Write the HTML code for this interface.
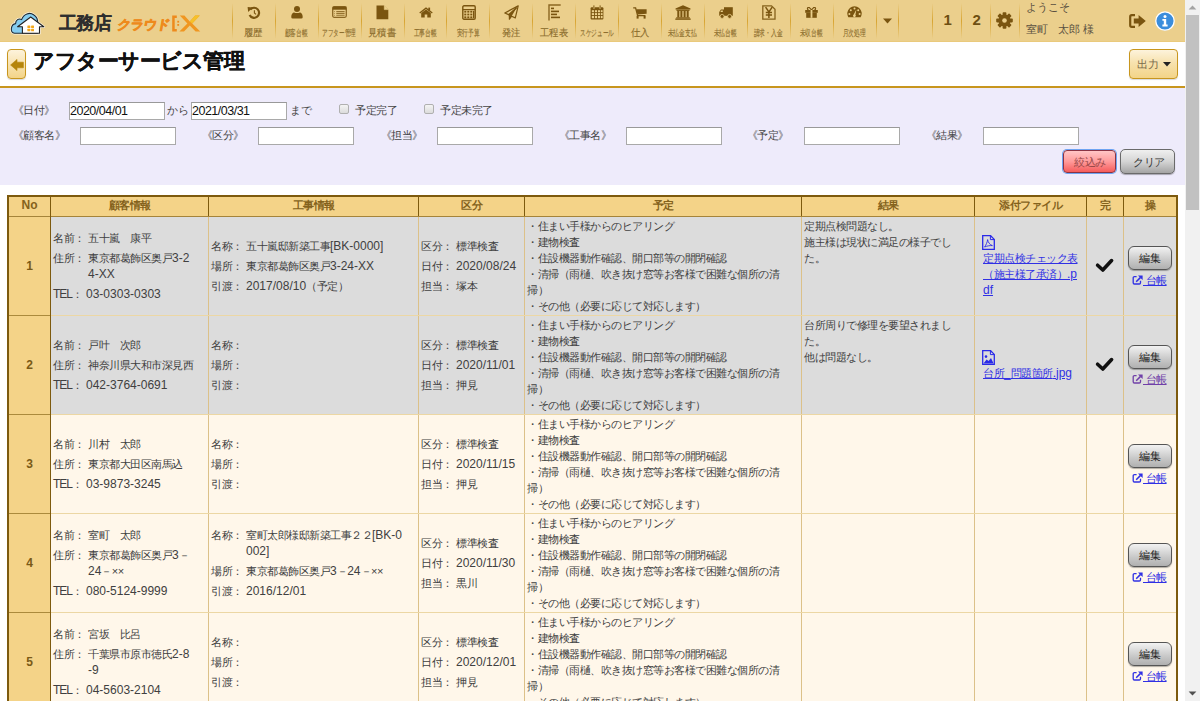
<!DOCTYPE html><html><head><meta charset="utf-8"><style>
*{box-sizing:border-box}
html,body{margin:0;padding:0;width:1200px;height:701px;overflow:hidden;background:#fff}
body{font-family:"Liberation Sans",sans-serif;font-size:11px;letter-spacing:-0.5px;color:#333;position:relative}
.l{font-size:12px;letter-spacing:0}
.a{position:absolute}
#hd{position:absolute;left:0;top:0;width:1185px;height:42px;background:#ebcf8c;box-shadow:inset 0 -1px #eaca7c}
.sep{position:absolute;top:3px;width:1px;height:36px;background:linear-gradient(to bottom,rgba(214,160,40,0) 0%,rgba(214,160,40,.9) 50%,rgba(214,160,40,0) 100%)}
.ni{position:absolute;top:0;height:42px}
.ni svg{position:absolute;display:block}
.nl{position:absolute;top:27px;left:0;width:100%;text-align:center;font-size:10px;letter-spacing:0;color:#8b6d2c;line-height:11px;white-space:nowrap}
.nl span{display:inline-block;-webkit-text-stroke:0.15px #8b6d2c}
#tt{position:absolute;left:0;top:42px;width:1185px;height:46px;background:#fff;border-bottom:2px solid #c8961e}
#flt{position:absolute;left:0;top:88px;width:1185px;height:97px;background:#eeebfb}
.fl{position:absolute;font-size:11px;letter-spacing:-0.5px;color:#444;line-height:14px;white-space:nowrap}
.inp{position:absolute;width:96px;height:18px;background:#fff;border:1px solid #a9a9a9;border-top-color:#999;font-size:12.5px;letter-spacing:-0.5px;color:#111;line-height:16px;padding-left:0}
.cb{position:absolute;width:10px;height:10px;border:1px solid #b0b0b0;border-radius:2px;background:linear-gradient(#f4f4f4,#dcdcdc)}
.hl{position:absolute;background:#7d5a0e}
.cell{position:absolute;display:flex;flex-direction:column;justify-content:center;line-height:16px;color:#404040}
.kv{display:flex;margin:2px 0}
.kv .k{flex:none;margin-right:3.5px}
.tel{letter-spacing:-1px}
.kv .v{flex:1;word-break:break-all}
a{color:#3030e4;text-decoration:underline}
.btn{position:absolute;border-radius:5px}
</style></head><body>

<div id="hd">
<svg class="a" style="left:0;top:0" width="210" height="42" viewBox="0 0 210 42">
<g fill="#fff" stroke="#fff8ea" stroke-width="2.6" stroke-linejoin="round" opacity=".9"><path d="M14.5 33.2 C9.5 32.5 10.8 24.2 15.6 23.6 C15.6 19.8 18.8 18.2 21.6 19.6 C23.6 13.8 29.8 11.8 33.6 14.8 C36.4 16.4 38 19.6 37.5 23.5 L37.5 33.2 Z"/><path d="M17.6 26.8 L30.7 17 L43.8 26.8 H39.5 V33.3 H22.4 V26.8 Z"/></g>
<path d="M14.5 33.2 C9.5 32.5 10.8 24.2 15.6 23.6 C15.6 19.8 18.8 18.2 21.6 19.6 C23.6 13.8 29.8 11.8 33.6 14.8 C36.4 16.4 38 19.6 37.5 23.5 L37.5 33.2 Z" fill="#85cdf0" stroke="#1d2b33" stroke-width="1.1" stroke-linejoin="round"/>
<path d="M17.6 26.8 L30.7 17 L43.8 26.8 H39.5 V33.3 H22.4 V26.8 Z" fill="#fff" stroke="#222" stroke-width="1.1" stroke-linejoin="round"/>
<g fill="#f2a81c"><rect x="27.4" y="25.5" width="2.9" height="2.6" rx=".5"/><rect x="31.1" y="25.5" width="2.9" height="2.6" rx=".5"/><rect x="27.4" y="28.7" width="2.9" height="2.6" rx=".5"/><rect x="31.1" y="28.7" width="2.9" height="2.6" rx=".5"/></g>
</svg>
<div class="a" style="left:59px;top:12px;font-size:18px;letter-spacing:-0.6px;font-weight:bold;color:#2e2e2e;line-height:22px;-webkit-text-stroke:0.15px #2e2e2e">工務店</div>
<div class="a" style="left:116px;top:17px;font-size:13px;letter-spacing:-0.3px;font-weight:bold;color:#ee8a1c;line-height:16px;-webkit-text-stroke:0.8px #ee8a1c;transform:skewX(-10deg) scaleX(1.02);transform-origin:left bottom">クラウド</div>
<svg class="a" style="left:171px;top:14px" width="31" height="19" viewBox="0 0 31 19"><path d="M1.2 1.6 H5.8 V4 H3.7 V15 H5.8 V17.4 H1.2Z" fill="#ee8a1c"/><rect x="6.3" y="6.8" width="1.8" height="1.8" fill="#ee8a1c"/><rect x="6.3" y="10" width="1.8" height="1.8" fill="#ee8a1c"/><path d="M8.8 1.6 H13.4 L18.8 7.6 L24.2 1.6 H28.8 L21.2 9.5 L29.2 17.4 H24.6 L18.8 11.4 L13 17.4 H8.4 L16.4 9.5Z" fill="#f09620"/><path d="M24.2 1.6 H28.8 L21.2 9.5 L18.8 7.6Z" fill="#f6c12a"/></svg>
<div class="sep" style="left:232px"></div>
<div class="sep" style="left:275px"></div>
<div class="sep" style="left:318px"></div>
<div class="sep" style="left:361px"></div>
<div class="sep" style="left:404px"></div>
<div class="sep" style="left:446px"></div>
<div class="sep" style="left:489px"></div>
<div class="sep" style="left:532px"></div>
<div class="sep" style="left:575px"></div>
<div class="sep" style="left:618px"></div>
<div class="sep" style="left:661px"></div>
<div class="sep" style="left:704px"></div>
<div class="sep" style="left:747px"></div>
<div class="sep" style="left:790px"></div>
<div class="sep" style="left:833px"></div>
<div class="sep" style="left:876px"></div>
<div class="sep" style="left:898px"></div>
<div class="sep" style="left:932px"></div>
<div class="sep" style="left:961px"></div>
<div class="sep" style="left:990px"></div>
<div class="sep" style="left:1019px"></div>
<div class="ni" style="left:232.0px;width:42.89999999999998px"><svg style="left:15.1px;top:5.5px" width="14" height="13" viewBox="0 0 14 13"><path d="M3.2 3.6 A5 5 0 1 1 2.6 9" fill="none" stroke="#7a5510" stroke-width="2.2"/><path d="M0.6 1 L5.6 1.6 L1.2 6 Z" fill="#7a5510"/><path d="M7.4 4.2 V7 L9 8.4" fill="none" stroke="#7a5510" stroke-width="1.1"/></svg><div class="nl" style="left:-10px;width:62.89999999999998px"><span style="transform:scaleX(0.93);transform-origin:center">履歴</span></div></div>
<div class="ni" style="left:274.9px;width:42.900000000000034px"><svg style="left:16.2px;top:5.5px" width="12" height="13" viewBox="0 0 12 13"><circle cx="6" cy="3.1" r="3" fill="#7a5510"/><path d="M0.3 11.2 C0.3 7.6 2 6.6 3.2 6.4 C4.4 7.3 7.6 7.3 8.8 6.4 C10 6.6 11.7 7.6 11.7 11.2 Q11.7 12.6 10.3 12.6 H1.7 Q0.3 12.6 0.3 11.2Z" fill="#7a5510"/></svg><div class="nl" style="left:-20px;width:82.90000000000003px"><span style="transform:scale(0.57,0.9);transform-origin:center">顧客台帳</span></div></div>
<div class="ni" style="left:317.8px;width:42.89999999999998px"><svg style="left:14.6px;top:6px" width="15" height="12" viewBox="0 0 15 12"><rect x="0.7" y="0.7" width="13.6" height="10.6" rx="1.5" fill="none" stroke="#7a5510" stroke-width="1.3" opacity=".85"/><rect x="0.7" y="0.7" width="13.6" height="3" fill="#7a5510"/><path d="M2.2 5.5 H3 M2.2 7.4 H3 M2.2 9.3 H3" stroke="#7a5510" stroke-width="1" opacity=".6"/><path d="M4.3 5.5 H12.6 M4.3 7.4 H12.6 M4.3 9.3 H12.6" stroke="#7a5510" stroke-width="1.1" opacity=".75"/></svg><div class="nl" style="left:-20px;width:82.89999999999998px"><span style="transform:scale(0.56,0.9);transform-origin:center">アフター管理</span></div></div>
<div class="ni" style="left:360.7px;width:42.900000000000034px"><svg style="left:15.7px;top:4.8px" width="13" height="15" viewBox="0 0 13 15"><path d="M0.5 0.5 H8 L12.3 4.8 V14.3 H0.5 Z" fill="#7a5510"/><path d="M8.3 0.5 V4.6 H12.3" fill="#ebd08c" stroke="#ebd08c" stroke-width="0.6"/></svg><div class="nl" style="left:-10px;width:62.900000000000034px"><span style="transform:scaleX(0.93);transform-origin:center">見積書</span></div></div>
<div class="ni" style="left:403.6px;width:42.89999999999998px"><svg style="left:15.1px;top:6.6px" width="14" height="11" viewBox="0 0 14 11"><path d="M0.3 5.6 L7 0.3 L13.7 5.6 L12.9 6.4 L7 1.9 L1.1 6.4Z" fill="#7a5510"/><rect x="9.3" y="0.6" width="1.8" height="3" fill="#7a5510"/><path d="M2.2 6 L7 2.5 L11.8 6 V10.6 H8.3 V7.6 H5.7 V10.6 H2.2Z" fill="#7a5510"/></svg><div class="nl" style="left:-20px;width:82.89999999999998px"><span style="transform:scale(0.57,0.9);transform-origin:center">工事台帳</span></div></div>
<div class="ni" style="left:446.5px;width:42.89999999999998px"><svg style="left:15.1px;top:4.8px" width="14" height="15" viewBox="0 0 14 15"><rect x="0.8" y="0.8" width="12.4" height="13.4" rx="1.2" fill="none" stroke="#7a5510" stroke-width="1.4"/><path d="M0.8 4.6 H13.2" stroke="#7a5510" stroke-width="1.2"/><g fill="#7a5510"><rect x="2.3" y="5.8" width="2" height="1.8"/><rect x="5.3" y="5.8" width="2" height="1.8"/><rect x="8.3" y="5.8" width="2" height="1.8"/><rect x="2.3" y="8.6" width="2" height="1.8"/><rect x="5.3" y="8.6" width="2" height="1.8"/><rect x="8.3" y="8.6" width="2" height="1.8"/><rect x="2.3" y="11.4" width="2" height="1.8"/><rect x="5.3" y="11.4" width="2" height="1.8"/><rect x="8.3" y="11.4" width="2" height="1.8"/><rect x="11" y="5.8" width="1.3" height="7.4"/></g></svg><div class="nl" style="left:-20px;width:82.89999999999998px"><span style="transform:scale(0.57,0.9);transform-origin:center">実行予算</span></div></div>
<div class="ni" style="left:489.4px;width:42.89999999999998px"><svg style="left:14.6px;top:4.8px" width="15" height="15" viewBox="0 0 15 15"><path d="M14.2 0.8 L0.8 8 L4.6 9.6 L12.5 2.8 L5.4 10.2 V14.2 L7.6 11.2 L11.3 12.9 Z" fill="none" stroke="#7a5510" stroke-width="1.2" stroke-linejoin="round"/><path d="M12.5 2.8 L4.6 9.6 L5.4 14.2 L7.6 11.2Z" fill="#7a5510"/></svg><div class="nl" style="left:-10px;width:62.89999999999998px"><span style="transform:scaleX(0.93);transform-origin:center">発注</span></div></div>
<div class="ni" style="left:532.3px;width:42.90000000000009px"><svg style="left:15.7px;top:3.8px" width="13" height="17" viewBox="0 0 13 17"><path d="M1 16.5 V1 H12.7" fill="none" stroke="#7a5510" stroke-width="1.4" opacity=".85"/><g fill="#7a5510"><rect x="3" y="3.6" width="3" height="1.6"/><rect x="3" y="6.6" width="8" height="1.6"/><rect x="3" y="9.6" width="6" height="1.6"/><rect x="3" y="12.6" width="9" height="1.6"/></g></svg><div class="nl" style="left:-10px;width:62.90000000000009px"><span style="transform:scaleX(0.93);transform-origin:center">工程表</span></div></div>
<div class="ni" style="left:575.2px;width:42.899999999999864px"><svg style="left:15.1px;top:4.6px" width="14" height="15" viewBox="0 0 14 15"><rect x="0.6" y="2.3" width="12.8" height="12.3" rx="1" fill="#7a5510"/><g fill="#ebd08c"><rect x="1.8" y="5.2" width="2.2" height="2"/><rect x="4.9" y="5.2" width="2.2" height="2"/><rect x="8" y="5.2" width="2.2" height="2"/><rect x="11" y="5.2" width="1.6" height="2"/><rect x="1.8" y="8.1" width="2.2" height="2"/><rect x="4.9" y="8.1" width="2.2" height="2"/><rect x="8" y="8.1" width="2.2" height="2"/><rect x="11" y="8.1" width="1.6" height="2"/><rect x="1.8" y="11" width="2.2" height="2.2"/><rect x="4.9" y="11" width="2.2" height="2.2"/><rect x="8" y="11" width="2.2" height="2.2"/><rect x="11" y="11" width="1.6" height="2.2"/><rect x="3" y="0.2" width="1.8" height="3.6" rx=".9"/><rect x="9.2" y="0.2" width="1.8" height="3.6" rx=".9"/></g><rect x="3.4" y="0.4" width="1" height="3.2" fill="#7a5510"/><rect x="9.6" y="0.4" width="1" height="3.2" fill="#7a5510"/></svg><div class="nl" style="left:-20px;width:82.89999999999986px"><span style="transform:scale(0.56,0.9);transform-origin:center">スケジュール</span></div></div>
<div class="ni" style="left:618.0999999999999px;width:42.90000000000009px"><svg style="left:15.2px;top:6.5px" width="14" height="12" viewBox="0 0 14 12"><path d="M0.2 0.9 H2.6 L4.6 8.6 H12.4" fill="none" stroke="#7a5510" stroke-width="1.3"/><path d="M3.3 2.3 H13.6 V6.8 L4.5 7.4Z" fill="#7a5510"/><rect x="3.6" y="8.8" width="2" height="2.8" fill="#7a5510"/><rect x="10.6" y="8.8" width="2" height="2.8" fill="#7a5510"/></svg><div class="nl" style="left:-10px;width:62.90000000000009px"><span style="transform:scaleX(0.93);transform-origin:center">仕入</span></div></div>
<div class="ni" style="left:661.0px;width:42.89999999999998px"><svg style="left:14.1px;top:4.6px" width="16" height="15" viewBox="0 0 16 15"><path d="M8 0.3 L15.5 3.6 V4.4 H0.5 V3.6Z" fill="#7a5510"/><rect x="1.5" y="4.6" width="13" height="1.3" fill="#7a5510"/><g fill="#7a5510"><rect x="2.3" y="5.9" width="2" height="6.4"/><rect x="5.4" y="5.9" width="2" height="6.4"/><rect x="8.6" y="5.9" width="2" height="6.4"/><rect x="11.7" y="5.9" width="2" height="6.4"/></g><rect x="1.2" y="12.3" width="13.6" height="1.2" fill="#7a5510"/><rect x="0.3" y="13.5" width="15.4" height="1.3" fill="#7a5510"/></svg><div class="nl" style="left:-20px;width:82.89999999999998px"><span style="transform:scale(0.57,0.9);transform-origin:center">未払金支払</span></div></div>
<div class="ni" style="left:703.9px;width:42.89999999999998px"><svg style="left:15.1px;top:6.5px" width="14" height="12" viewBox="0 0 14 12"><rect x="5" y="0.2" width="8.8" height="8.6" fill="#7a5510"/><path d="M0.2 5 L2 2.6 H5 V8.8 H0.2Z" fill="#7a5510"/><path d="M1.3 4.9 L2.4 3.5 H3.8 V4.9Z" fill="#ebd08c"/><circle cx="3.1" cy="9.4" r="2" fill="#7a5510" stroke="#ebd08c" stroke-width="0.8"/><circle cx="10.6" cy="9.4" r="2" fill="#7a5510" stroke="#ebd08c" stroke-width="0.8"/></svg><div class="nl" style="left:-20px;width:82.89999999999998px"><span style="transform:scale(0.57,0.9);transform-origin:center">未払台帳</span></div></div>
<div class="ni" style="left:746.8px;width:42.89999999999998px"><svg style="left:15.1px;top:4.6px" width="14" height="15" viewBox="0 0 14 15"><path d="M0.8 0.8 H9.5 L13 4.3 V14.2 H0.8Z" fill="none" stroke="#7a5510" stroke-width="1.3" opacity=".9"/><path d="M3.6 2.2 L6.9 7 L10.2 2.2 M6.9 7 V13 M3.8 7.6 H10 M3.8 10 H10" fill="none" stroke="#7a5510" stroke-width="1.5"/></svg><div class="nl" style="left:-20px;width:82.89999999999998px"><span style="transform:scale(0.57,0.9);transform-origin:center">請求・入金</span></div></div>
<div class="ni" style="left:789.6999999999999px;width:42.90000000000009px"><svg style="left:15.7px;top:6.5px" width="13" height="11" viewBox="0 0 13 11"><path d="M3.4 3 C1.6 1.8 2.8 -0.4 4.4 0.6 L6.5 2.8 L8.6 0.6 C10.2 -0.4 11.4 1.8 9.6 3" fill="none" stroke="#7a5510" stroke-width="1.2"/><rect x="0.2" y="3" width="12.6" height="2.8" fill="#7a5510"/><rect x="1.2" y="5.8" width="10.6" height="5" fill="#7a5510"/><rect x="5.6" y="3" width="1.8" height="7.8" fill="#ebd08c"/></svg><div class="nl" style="left:-20px;width:82.90000000000009px"><span style="transform:scale(0.57,0.9);transform-origin:center">未収台帳</span></div></div>
<div class="ni" style="left:832.6px;width:42.89999999999998px"><svg style="left:14.6px;top:6.3px" width="15" height="12" viewBox="0 0 15 12"><path d="M1.32 11.2 A7.2 7.2 0 1 1 13.68 11.2 Z" fill="#7a5510"/><g fill="#ebd08c"><circle cx="7.5" cy="2.6" r="1"/><circle cx="3.8" cy="4.3" r="1"/><circle cx="11.2" cy="4.3" r="1"/><circle cx="2.4" cy="8" r="1"/><circle cx="12.6" cy="8" r="1"/><path d="M9.4 3.4 L8.4 8.8 A1.4 1.4 0 1 1 6.7 8.6Z"/></g></svg><div class="nl" style="left:-20px;width:82.89999999999998px"><span style="transform:scale(0.57,0.9);transform-origin:center">月次処理</span></div></div>
<svg class="a" style="left:883px;top:18px" width="9" height="6" viewBox="0 0 9 6"><path d="M0 0.5 H9 L4.5 5.5Z" fill="#7a5510"/></svg>
<div class="a" style="left:943.5px;top:11px;font-size:15px;font-weight:bold;letter-spacing:0;color:#6e4f12;line-height:17px">1</div>
<div class="a" style="left:972.5px;top:11px;font-size:15px;font-weight:bold;letter-spacing:0;color:#6e4f12;line-height:17px">2</div>
<svg class="a" style="left:996px;top:12px" width="17" height="17" viewBox="0 0 17 17"><g fill="#7a5510"><rect x="6.6" y="0.2" width="3.8" height="4" rx="0.8" transform="rotate(0 8.5 8.5)"/><rect x="6.6" y="0.2" width="3.8" height="4" rx="0.8" transform="rotate(45 8.5 8.5)"/><rect x="6.6" y="0.2" width="3.8" height="4" rx="0.8" transform="rotate(90 8.5 8.5)"/><rect x="6.6" y="0.2" width="3.8" height="4" rx="0.8" transform="rotate(135 8.5 8.5)"/><rect x="6.6" y="0.2" width="3.8" height="4" rx="0.8" transform="rotate(180 8.5 8.5)"/><rect x="6.6" y="0.2" width="3.8" height="4" rx="0.8" transform="rotate(225 8.5 8.5)"/><rect x="6.6" y="0.2" width="3.8" height="4" rx="0.8" transform="rotate(270 8.5 8.5)"/><rect x="6.6" y="0.2" width="3.8" height="4" rx="0.8" transform="rotate(315 8.5 8.5)"/><circle cx="8.5" cy="8.5" r="6"/></g><circle cx="8.5" cy="8.5" r="2.3" fill="#ebcf8c"/></svg>
<div class="a" style="left:1025.5px;top:0px;font-size:11px;letter-spacing:0px;color:#5a5040;line-height:14px">ようこそ</div>
<div class="a" style="left:1026px;top:22px;font-size:11px;letter-spacing:-0.2px;color:#5a5040;line-height:14px">室町　太郎 様</div>
<svg class="a" style="left:1129px;top:14px" width="18" height="14" viewBox="0 0 18 14"><path d="M6 1.2 H2.8 Q1.2 1.2 1.2 2.8 V11.2 Q1.2 12.8 2.8 12.8 H6" fill="none" stroke="#7a5510" stroke-width="2.2"/><path d="M4.8 4.6 H9.6 V1 L16.8 7 L9.6 13 V9.4 H4.8Z" fill="#7a5510"/></svg>
<svg class="a" style="left:1155px;top:11px" width="20" height="20" viewBox="0 0 20 20"><circle cx="10" cy="10" r="9.2" fill="#3a8ddc" stroke="#fff" stroke-width="1.3"/><circle cx="10" cy="5.4" r="1.5" fill="#fff"/><path d="M7.4 8 H11.2 V13.6 H12.6 V15.4 H7.4 V13.6 H8.8 V9.8 H7.4Z" fill="#fff"/></svg>
</div>
<div id="tt">
<div class="a" style="left:7px;top:7px;width:19px;height:30px;border:1px solid #c8961e;border-radius:4px;background:linear-gradient(#fdf3dc,#f3d488);box-shadow:0 1px 1px rgba(0,0,0,.15)"><svg style="position:absolute;left:2px;top:9px" width="14" height="12" viewBox="0 0 14 12"><path d="M0.6 6 L7 0.4 V3.2 H13.4 V8.8 H7 V11.6Z" fill="#b5850c" stroke="#b5850c" stroke-width="0.6" stroke-linejoin="round"/></svg></div>
<div class="a" style="left:33px;top:6.5px;font-size:21px;letter-spacing:-0.5px;font-weight:bold;color:#111;line-height:24px;-webkit-text-stroke:0.35px #111">アフターサービス管理</div>
<div class="a" style="left:1129px;top:7px;width:49px;height:30px;border:1px solid #c8961e;border-radius:4px;background:linear-gradient(#fdf3dc 0%,#f7e2ae 45%,#f3d488 100%);box-shadow:0 1px 1px rgba(0,0,0,.15)"><span class="a" style="left:7px;top:8px;font-size:11px;letter-spacing:-0.3px;color:#7a6a4a;line-height:12px">出力</span><svg style="position:absolute;left:33px;top:12px" width="8" height="5" viewBox="0 0 8 5"><path d="M0 0 H8 L4 4.5Z" fill="#222"/></svg></div>
</div>
<div id="flt">
<div class="fl" style="left:12.5px;top:15.4px">《日付》</div>
<div class="inp" style="left:69px;top:14px;width:96px">2020/04/01</div>
<div class="fl" style="left:167px;top:15.4px">から</div>
<div class="inp" style="left:191px;top:14px;width:96px">2021/03/31</div>
<div class="fl" style="left:290px;top:15.4px">まで</div>
<div class="cb" style="left:339px;top:16px"></div>
<div class="fl" style="left:355px;top:15.4px">予定完了</div>
<div class="cb" style="left:424px;top:16px"></div>
<div class="fl" style="left:440px;top:15.4px">予定未完了</div>
<div class="fl" style="left:12.5px;top:40.4px">《顧客名》</div>
<div class="inp" style="left:80px;top:39px;width:96px"></div>
<div class="fl" style="left:201.5px;top:40.4px">《区分》</div>
<div class="inp" style="left:258px;top:39px;width:96px"></div>
<div class="fl" style="left:380.5px;top:40.4px">《担当》</div>
<div class="inp" style="left:437px;top:39px;width:96px"></div>
<div class="fl" style="left:558.5px;top:40.4px">《工事名》</div>
<div class="inp" style="left:626px;top:39px;width:96px"></div>
<div class="fl" style="left:746.5px;top:40.4px">《予定》</div>
<div class="inp" style="left:804px;top:39px;width:96px"></div>
<div class="fl" style="left:925.5px;top:40.4px">《結果》</div>
<div class="inp" style="left:983px;top:39px;width:96px"></div>
<div class="a" style="left:1063px;top:62px;width:53px;height:23px;border:1px solid #8a3444;border-radius:4px;background:linear-gradient(#ffc6c6,#ff9a9a 50%,#f65c5c);box-shadow:0 0 0 1px #6ea4f2"><span class="a" style="left:10px;top:4px;font-size:11px;color:#9a4a4a;line-height:14px">絞込み</span></div>
<div class="a" style="left:1120px;top:61px;width:55px;height:25px;border:1px solid #6a6a6a;border-radius:5px;background:linear-gradient(#f0f0f0,#d4d4d4 50%,#a4a4a4);box-shadow:0 1px 1px rgba(0,0,0,.3)"><span class="a" style="left:12px;top:5px;font-size:11px;color:#333;line-height:14px">クリア</span></div>
</div>
<div class="a" style="left:9px;top:197px;width:1167px;height:19px;background:#f4d388"></div>
<div class="a" style="left:51px;top:217px;width:1125px;height:98px;background:#dcdcdc"></div>
<div class="a" style="left:9px;top:217px;width:41px;height:98px;background:#f4d388"></div>
<div class="a" style="left:51px;top:316px;width:1125px;height:98px;background:#dcdcdc"></div>
<div class="a" style="left:9px;top:316px;width:41px;height:98px;background:#f4d388"></div>
<div class="a" style="left:51px;top:415px;width:1125px;height:98px;background:#fff7ea"></div>
<div class="a" style="left:9px;top:415px;width:41px;height:98px;background:#f4d388"></div>
<div class="a" style="left:51px;top:514px;width:1125px;height:98px;background:#fff7ea"></div>
<div class="a" style="left:9px;top:514px;width:41px;height:98px;background:#f4d388"></div>
<div class="a" style="left:51px;top:613px;width:1125px;height:98px;background:#fff7ea"></div>
<div class="a" style="left:9px;top:613px;width:41px;height:98px;background:#f4d388"></div>
<div class="a" style="left:208px;top:217px;width:1px;height:484px;background:#dcc189"></div>
<div class="a" style="left:418px;top:217px;width:1px;height:484px;background:#dcc189"></div>
<div class="a" style="left:524px;top:217px;width:1px;height:484px;background:#dcc189"></div>
<div class="a" style="left:801px;top:217px;width:1px;height:484px;background:#dcc189"></div>
<div class="a" style="left:974px;top:217px;width:1px;height:484px;background:#dcc189"></div>
<div class="a" style="left:1086px;top:217px;width:1px;height:484px;background:#dcc189"></div>
<div class="a" style="left:1123px;top:217px;width:1px;height:484px;background:#dcc189"></div>
<div class="a" style="left:51px;top:315px;width:1125px;height:1px;background:#ecd7a4"></div>
<div class="a" style="left:9px;top:315px;width:41px;height:1px;background:#ab8a3c"></div>
<div class="a" style="left:51px;top:414px;width:1125px;height:1px;background:#ecd7a4"></div>
<div class="a" style="left:9px;top:414px;width:41px;height:1px;background:#ab8a3c"></div>
<div class="a" style="left:51px;top:513px;width:1125px;height:1px;background:#ecd7a4"></div>
<div class="a" style="left:9px;top:513px;width:41px;height:1px;background:#ab8a3c"></div>
<div class="a" style="left:51px;top:612px;width:1125px;height:1px;background:#ecd7a4"></div>
<div class="a" style="left:9px;top:612px;width:41px;height:1px;background:#ab8a3c"></div>
<div class="hl" style="left:7px;top:195px;width:1171px;height:2px"></div>
<div class="hl" style="left:7px;top:195px;width:2px;height:506px"></div>
<div class="hl" style="left:1176px;top:195px;width:2px;height:506px"></div>
<div class="a" style="left:9px;top:216px;width:1167px;height:1px;background:#a5843a"></div>
<div class="hl" style="left:50px;top:197px;width:1px;height:504px"></div>
<div class="hl" style="left:208px;top:197px;width:1px;height:19px"></div>
<div class="hl" style="left:418px;top:197px;width:1px;height:19px"></div>
<div class="hl" style="left:524px;top:197px;width:1px;height:19px"></div>
<div class="hl" style="left:801px;top:197px;width:1px;height:19px"></div>
<div class="hl" style="left:974px;top:197px;width:1px;height:19px"></div>
<div class="hl" style="left:1086px;top:197px;width:1px;height:19px"></div>
<div class="hl" style="left:1123px;top:197px;width:1px;height:19px"></div>
<div class="a" style="left:9px;top:196px;width:41px;height:19px;line-height:19px;text-align:center;font-weight:bold;color:#84621c"><span class="l">No</span></div>
<div class="a" style="left:51px;top:196px;width:157px;height:19px;line-height:19px;text-align:center;font-weight:bold;color:#84621c">顧客情報</div>
<div class="a" style="left:209px;top:196px;width:209px;height:19px;line-height:19px;text-align:center;font-weight:bold;color:#84621c">工事情報</div>
<div class="a" style="left:419px;top:196px;width:105px;height:19px;line-height:19px;text-align:center;font-weight:bold;color:#84621c">区分</div>
<div class="a" style="left:525px;top:196px;width:276px;height:19px;line-height:19px;text-align:center;font-weight:bold;color:#84621c">予定</div>
<div class="a" style="left:802px;top:196px;width:172px;height:19px;line-height:19px;text-align:center;font-weight:bold;color:#84621c">結果</div>
<div class="a" style="left:975px;top:196px;width:111px;height:19px;line-height:19px;text-align:center;font-weight:bold;color:#84621c">添付ファイル</div>
<div class="a" style="left:1087px;top:196px;width:36px;height:19px;line-height:19px;text-align:center;font-weight:bold;color:#84621c">完</div>
<div class="a" style="left:1124px;top:196px;width:52px;height:19px;line-height:19px;text-align:center;font-weight:bold;color:#84621c">操</div>
<div class="a" style="left:9px;top:217px;width:41px;height:98px;display:flex;align-items:center;justify-content:center;font-weight:bold;font-size:12px;letter-spacing:0;color:#7a5a16">1</div>
<div class="cell" style="left:51px;top:217px;width:157px;height:98px;padding:0 15px 0 2px;"><div class="kv"><div class="k">名前：</div><div class="v">五十嵐　康平</div></div><div class="kv"><div class="k">住所：</div><div class="v">東京都葛飾区奥戸<span class="l">3-24-XX</span></div></div><div class="kv"><div class="k"><span class="l"><span class=tel>TEL</span></span>：</div><div class="v"><span class="l"> 03-0303-0303</span></div></div></div>
<div class="cell" style="left:209px;top:217px;width:209px;height:98px;padding:0 15px 0 2px;"><div class="kv"><div class="k">名称：</div><div class="v">五十嵐邸新築工事<span class="l">[BK-0000]</span></div></div><div class="kv"><div class="k">場所：</div><div class="v">東京都葛飾区奥戸<span class="l">3-24-XX</span></div></div><div class="kv"><div class="k">引渡：</div><div class="v"><span class="l">2017/08/10</span>（予定）</div></div></div>
<div class="cell" style="left:419px;top:217px;width:105px;height:98px;padding:0 2px;"><div class="kv"><div class="k">区分：</div><div class="v">標準検査</div></div><div class="kv"><div class="k">日付：</div><div class="v"><span class="l">2020/08/24</span></div></div><div class="kv"><div class="k">担当：</div><div class="v">塚本</div></div></div>
<div class="cell" style="left:525px;top:217px;width:276px;height:98px;padding:1px 2px;justify-content:flex-start"><div>・住まい手様からのヒアリング</div><div>・建物検査</div><div>・住設機器動作確認、開口部等の開閉確認</div><div>・清掃（雨樋、吹き抜け窓等お客様で困難な個所の清掃）</div><div>・その他（必要に応じて対応します）</div></div>
<div class="cell" style="left:802px;top:217px;width:172px;height:98px;padding:1px 2px;justify-content:flex-start;padding-right:20px"><div>定期点検問題なし。</div><div>施主様は現状に満足の様子でした。</div></div>
<div class="cell" style="left:975px;top:217px;width:111px;height:98px;padding:0 7px 0 8px;word-break:break-all"><div style="margin-left:-1px"><svg width="13" height="15" viewBox="0 0 13 15" style="display:block"><path d="M0.7 0.7 H8.6 L12.3 4.4 V14.3 H0.7Z" fill="none" stroke="#2a2ae8" stroke-width="1.3"/><path d="M8.4 0.7 V4.6 H12.3" fill="none" stroke="#2a2ae8" stroke-width="1"/><path d="M2.6 12 C4 10 5.4 7 5.6 4.6 C5.8 7 8 10 10.4 10.6 C8 10.4 4.6 11 2.6 12Z" fill="none" stroke="#2a2ae8" stroke-width="0.9"/></svg></div><div><a>定期点検チェック表（施主様了承済）<span class="l">.pdf</span></a></div></div>
<svg class="a" style="left:1095px;top:256.5px" width="20" height="16" viewBox="0 0 20 16"><path d="M2.6 8.2 L7.8 13 L16.6 3.6" fill="none" stroke="#111" stroke-width="3.6" stroke-linecap="round" stroke-linejoin="round"/></svg>
<div class="a" style="left:1128px;top:246px;width:44px;height:24px;border:1px solid #555;border-radius:6px;background:linear-gradient(#f2f2f2,#c8c8c8 60%,#b0b0b0);box-shadow:0 1px 1px rgba(0,0,0,.3)"><span class="a" style="left:10px;top:5px;font-size:11px;color:#222;line-height:12px">編集</span></div>
<div class="a" style="left:1132px;top:272.5px;width:40px;height:14px;line-height:14px;color:#3030e4;white-space:nowrap"><svg width="11" height="10" viewBox="0 0 11 10" style="vertical-align:-1px"><path d="M4.6 1.7 H2.4 Q1.2 1.7 1.2 2.9 V7.8 Q1.2 9 2.4 9 H7.3 Q8.5 9 8.5 7.8 V5.8" fill="none" stroke="#3030e4" stroke-width="1.3"/><path d="M6 0.4 H10.6 V5 Z" fill="#3030e4"/><path d="M8.6 2.4 L4.2 6.8" stroke="#3030e4" stroke-width="1.5"/></svg><a style="padding-left:0px;color:#3030e4">&nbsp;台帳</a></div>
<div class="a" style="left:9px;top:316px;width:41px;height:98px;display:flex;align-items:center;justify-content:center;font-weight:bold;font-size:12px;letter-spacing:0;color:#7a5a16">2</div>
<div class="cell" style="left:51px;top:316px;width:157px;height:98px;padding:0 15px 0 2px;"><div class="kv"><div class="k">名前：</div><div class="v">戸叶　次郎</div></div><div class="kv"><div class="k">住所：</div><div class="v">神奈川県大和市深見西</div></div><div class="kv"><div class="k"><span class="l"><span class=tel>TEL</span></span>：</div><div class="v"><span class="l"> 042-3764-0691</span></div></div></div>
<div class="cell" style="left:209px;top:316px;width:209px;height:98px;padding:0 15px 0 2px;"><div class="kv"><div class="k">名称：</div><div class="v"></div></div><div class="kv"><div class="k">場所：</div><div class="v"></div></div><div class="kv"><div class="k">引渡：</div><div class="v"></div></div></div>
<div class="cell" style="left:419px;top:316px;width:105px;height:98px;padding:0 2px;"><div class="kv"><div class="k">区分：</div><div class="v">標準検査</div></div><div class="kv"><div class="k">日付：</div><div class="v"><span class="l">2020/11/01</span></div></div><div class="kv"><div class="k">担当：</div><div class="v">押見</div></div></div>
<div class="cell" style="left:525px;top:316px;width:276px;height:98px;padding:1px 2px;justify-content:flex-start"><div>・住まい手様からのヒアリング</div><div>・建物検査</div><div>・住設機器動作確認、開口部等の開閉確認</div><div>・清掃（雨樋、吹き抜け窓等お客様で困難な個所の清掃）</div><div>・その他（必要に応じて対応します）</div></div>
<div class="cell" style="left:802px;top:316px;width:172px;height:98px;padding:1px 2px;justify-content:flex-start;padding-right:20px"><div>台所周りで修理を要望されました。</div><div>他は問題なし。</div></div>
<div class="cell" style="left:975px;top:316px;width:111px;height:98px;padding:0 7px 0 8px;word-break:break-all"><div style="margin-left:-1px"><svg width="13" height="15" viewBox="0 0 13 15" style="display:block"><path d="M0.7 0.7 H8.6 L12.3 4.4 V14.3 H0.7Z" fill="none" stroke="#2a2ae8" stroke-width="1.3"/><path d="M8.4 0.7 V4.6 H12.3" fill="none" stroke="#2a2ae8" stroke-width="1"/><circle cx="4" cy="6.6" r="1.3" fill="#2a2ae8"/><path d="M1.5 13.5 L4.6 9.4 L6.6 11 L9 8 L11.6 13.5Z" fill="#2a2ae8"/></svg></div><div><a>台所<span class="l">_</span>問題箇所<span class="l">.jpg</span></a></div></div>
<svg class="a" style="left:1095px;top:355.5px" width="20" height="16" viewBox="0 0 20 16"><path d="M2.6 8.2 L7.8 13 L16.6 3.6" fill="none" stroke="#111" stroke-width="3.6" stroke-linecap="round" stroke-linejoin="round"/></svg>
<div class="a" style="left:1128px;top:345px;width:44px;height:24px;border:1px solid #555;border-radius:6px;background:linear-gradient(#f2f2f2,#c8c8c8 60%,#b0b0b0);box-shadow:0 1px 1px rgba(0,0,0,.3)"><span class="a" style="left:10px;top:5px;font-size:11px;color:#222;line-height:12px">編集</span></div>
<div class="a" style="left:1132px;top:371.5px;width:40px;height:14px;line-height:14px;color:#7040a8;white-space:nowrap"><svg width="11" height="10" viewBox="0 0 11 10" style="vertical-align:-1px"><path d="M4.6 1.7 H2.4 Q1.2 1.7 1.2 2.9 V7.8 Q1.2 9 2.4 9 H7.3 Q8.5 9 8.5 7.8 V5.8" fill="none" stroke="#7040a8" stroke-width="1.3"/><path d="M6 0.4 H10.6 V5 Z" fill="#7040a8"/><path d="M8.6 2.4 L4.2 6.8" stroke="#7040a8" stroke-width="1.5"/></svg><a style="padding-left:0px;color:#7040a8">&nbsp;台帳</a></div>
<div class="a" style="left:9px;top:415px;width:41px;height:98px;display:flex;align-items:center;justify-content:center;font-weight:bold;font-size:12px;letter-spacing:0;color:#7a5a16">3</div>
<div class="cell" style="left:51px;top:415px;width:157px;height:98px;padding:0 15px 0 2px;"><div class="kv"><div class="k">名前：</div><div class="v">川村　太郎</div></div><div class="kv"><div class="k">住所：</div><div class="v">東京都大田区南馬込</div></div><div class="kv"><div class="k"><span class="l"><span class=tel>TEL</span></span>：</div><div class="v"><span class="l"> 03-9873-3245</span></div></div></div>
<div class="cell" style="left:209px;top:415px;width:209px;height:98px;padding:0 15px 0 2px;"><div class="kv"><div class="k">名称：</div><div class="v"></div></div><div class="kv"><div class="k">場所：</div><div class="v"></div></div><div class="kv"><div class="k">引渡：</div><div class="v"></div></div></div>
<div class="cell" style="left:419px;top:415px;width:105px;height:98px;padding:0 2px;"><div class="kv"><div class="k">区分：</div><div class="v">標準検査</div></div><div class="kv"><div class="k">日付：</div><div class="v"><span class="l">2020/11/15</span></div></div><div class="kv"><div class="k">担当：</div><div class="v">押見</div></div></div>
<div class="cell" style="left:525px;top:415px;width:276px;height:98px;padding:1px 2px;justify-content:flex-start"><div>・住まい手様からのヒアリング</div><div>・建物検査</div><div>・住設機器動作確認、開口部等の開閉確認</div><div>・清掃（雨樋、吹き抜け窓等お客様で困難な個所の清掃）</div><div>・その他（必要に応じて対応します）</div></div>
<div class="a" style="left:1128px;top:444px;width:44px;height:24px;border:1px solid #555;border-radius:6px;background:linear-gradient(#f2f2f2,#c8c8c8 60%,#b0b0b0);box-shadow:0 1px 1px rgba(0,0,0,.3)"><span class="a" style="left:10px;top:5px;font-size:11px;color:#222;line-height:12px">編集</span></div>
<div class="a" style="left:1132px;top:470.5px;width:40px;height:14px;line-height:14px;color:#3030e4;white-space:nowrap"><svg width="11" height="10" viewBox="0 0 11 10" style="vertical-align:-1px"><path d="M4.6 1.7 H2.4 Q1.2 1.7 1.2 2.9 V7.8 Q1.2 9 2.4 9 H7.3 Q8.5 9 8.5 7.8 V5.8" fill="none" stroke="#3030e4" stroke-width="1.3"/><path d="M6 0.4 H10.6 V5 Z" fill="#3030e4"/><path d="M8.6 2.4 L4.2 6.8" stroke="#3030e4" stroke-width="1.5"/></svg><a style="padding-left:0px;color:#3030e4">&nbsp;台帳</a></div>
<div class="a" style="left:9px;top:514px;width:41px;height:98px;display:flex;align-items:center;justify-content:center;font-weight:bold;font-size:12px;letter-spacing:0;color:#7a5a16">4</div>
<div class="cell" style="left:51px;top:514px;width:157px;height:98px;padding:0 15px 0 2px;"><div class="kv"><div class="k">名前：</div><div class="v">室町　太郎</div></div><div class="kv"><div class="k">住所：</div><div class="v">東京都葛飾区奥戸<span class="l">3</span>－<span class="l">24</span>－××</div></div><div class="kv"><div class="k"><span class="l"><span class=tel>TEL</span></span>：</div><div class="v"><span class="l"> 080-5124-9999</span></div></div></div>
<div class="cell" style="left:209px;top:514px;width:209px;height:98px;padding:0 15px 0 2px;"><div class="kv"><div class="k">名称：</div><div class="v">室町太郎様邸新築工事２２<span class="l">[BK-0002]</span></div></div><div class="kv"><div class="k">場所：</div><div class="v">東京都葛飾区奥戸<span class="l">3</span>－<span class="l">24</span>－××</div></div><div class="kv"><div class="k">引渡：</div><div class="v"><span class="l">2016/12/01</span></div></div></div>
<div class="cell" style="left:419px;top:514px;width:105px;height:98px;padding:0 2px;"><div class="kv"><div class="k">区分：</div><div class="v">標準検査</div></div><div class="kv"><div class="k">日付：</div><div class="v"><span class="l">2020/11/30</span></div></div><div class="kv"><div class="k">担当：</div><div class="v">黒川</div></div></div>
<div class="cell" style="left:525px;top:514px;width:276px;height:98px;padding:1px 2px;justify-content:flex-start"><div>・住まい手様からのヒアリング</div><div>・建物検査</div><div>・住設機器動作確認、開口部等の開閉確認</div><div>・清掃（雨樋、吹き抜け窓等お客様で困難な個所の清掃）</div><div>・その他（必要に応じて対応します）</div></div>
<div class="a" style="left:1128px;top:543px;width:44px;height:24px;border:1px solid #555;border-radius:6px;background:linear-gradient(#f2f2f2,#c8c8c8 60%,#b0b0b0);box-shadow:0 1px 1px rgba(0,0,0,.3)"><span class="a" style="left:10px;top:5px;font-size:11px;color:#222;line-height:12px">編集</span></div>
<div class="a" style="left:1132px;top:569.5px;width:40px;height:14px;line-height:14px;color:#3030e4;white-space:nowrap"><svg width="11" height="10" viewBox="0 0 11 10" style="vertical-align:-1px"><path d="M4.6 1.7 H2.4 Q1.2 1.7 1.2 2.9 V7.8 Q1.2 9 2.4 9 H7.3 Q8.5 9 8.5 7.8 V5.8" fill="none" stroke="#3030e4" stroke-width="1.3"/><path d="M6 0.4 H10.6 V5 Z" fill="#3030e4"/><path d="M8.6 2.4 L4.2 6.8" stroke="#3030e4" stroke-width="1.5"/></svg><a style="padding-left:0px;color:#3030e4">&nbsp;台帳</a></div>
<div class="a" style="left:9px;top:613px;width:41px;height:98px;display:flex;align-items:center;justify-content:center;font-weight:bold;font-size:12px;letter-spacing:0;color:#7a5a16">5</div>
<div class="cell" style="left:51px;top:613px;width:157px;height:98px;padding:0 15px 0 2px;"><div class="kv"><div class="k">名前：</div><div class="v">宮坂　比呂</div></div><div class="kv"><div class="k">住所：</div><div class="v">千葉県市原市徳氏<span class="l">2-8-9</span></div></div><div class="kv"><div class="k"><span class="l"><span class=tel>TEL</span></span>：</div><div class="v"><span class="l"> 04-5603-2104</span></div></div></div>
<div class="cell" style="left:209px;top:613px;width:209px;height:98px;padding:0 15px 0 2px;"><div class="kv"><div class="k">名称：</div><div class="v"></div></div><div class="kv"><div class="k">場所：</div><div class="v"></div></div><div class="kv"><div class="k">引渡：</div><div class="v"></div></div></div>
<div class="cell" style="left:419px;top:613px;width:105px;height:98px;padding:0 2px;"><div class="kv"><div class="k">区分：</div><div class="v">標準検査</div></div><div class="kv"><div class="k">日付：</div><div class="v"><span class="l">2020/12/01</span></div></div><div class="kv"><div class="k">担当：</div><div class="v">押見</div></div></div>
<div class="cell" style="left:525px;top:613px;width:276px;height:98px;padding:1px 2px;justify-content:flex-start"><div>・住まい手様からのヒアリング</div><div>・建物検査</div><div>・住設機器動作確認、開口部等の開閉確認</div><div>・清掃（雨樋、吹き抜け窓等お客様で困難な個所の清掃）</div><div>・その他（必要に応じて対応します）</div></div>
<div class="a" style="left:1128px;top:642px;width:44px;height:24px;border:1px solid #555;border-radius:6px;background:linear-gradient(#f2f2f2,#c8c8c8 60%,#b0b0b0);box-shadow:0 1px 1px rgba(0,0,0,.3)"><span class="a" style="left:10px;top:5px;font-size:11px;color:#222;line-height:12px">編集</span></div>
<div class="a" style="left:1132px;top:668.5px;width:40px;height:14px;line-height:14px;color:#3030e4;white-space:nowrap"><svg width="11" height="10" viewBox="0 0 11 10" style="vertical-align:-1px"><path d="M4.6 1.7 H2.4 Q1.2 1.7 1.2 2.9 V7.8 Q1.2 9 2.4 9 H7.3 Q8.5 9 8.5 7.8 V5.8" fill="none" stroke="#3030e4" stroke-width="1.3"/><path d="M6 0.4 H10.6 V5 Z" fill="#3030e4"/><path d="M8.6 2.4 L4.2 6.8" stroke="#3030e4" stroke-width="1.5"/></svg><a style="padding-left:0px;color:#3030e4">&nbsp;台帳</a></div>
<div class="a" style="left:1185px;top:0;width:15px;height:701px;background:#f1f1f1"></div>
<div class="a" style="left:1186px;top:15px;width:13px;height:195px;background:#c1c1c1"></div>
<svg class="a" style="left:1185px;top:0" width="15" height="15" viewBox="0 0 15 15"><path d="M3.6 9.6 H11.4 L7.5 5.6Z" fill="#a3a3a3"/></svg>
<svg class="a" style="left:1185px;top:686px" width="15" height="15" viewBox="0 0 15 15"><path d="M3.6 5.4 H11.4 L7.5 9.4Z" fill="#505050"/></svg>
</body></html>
